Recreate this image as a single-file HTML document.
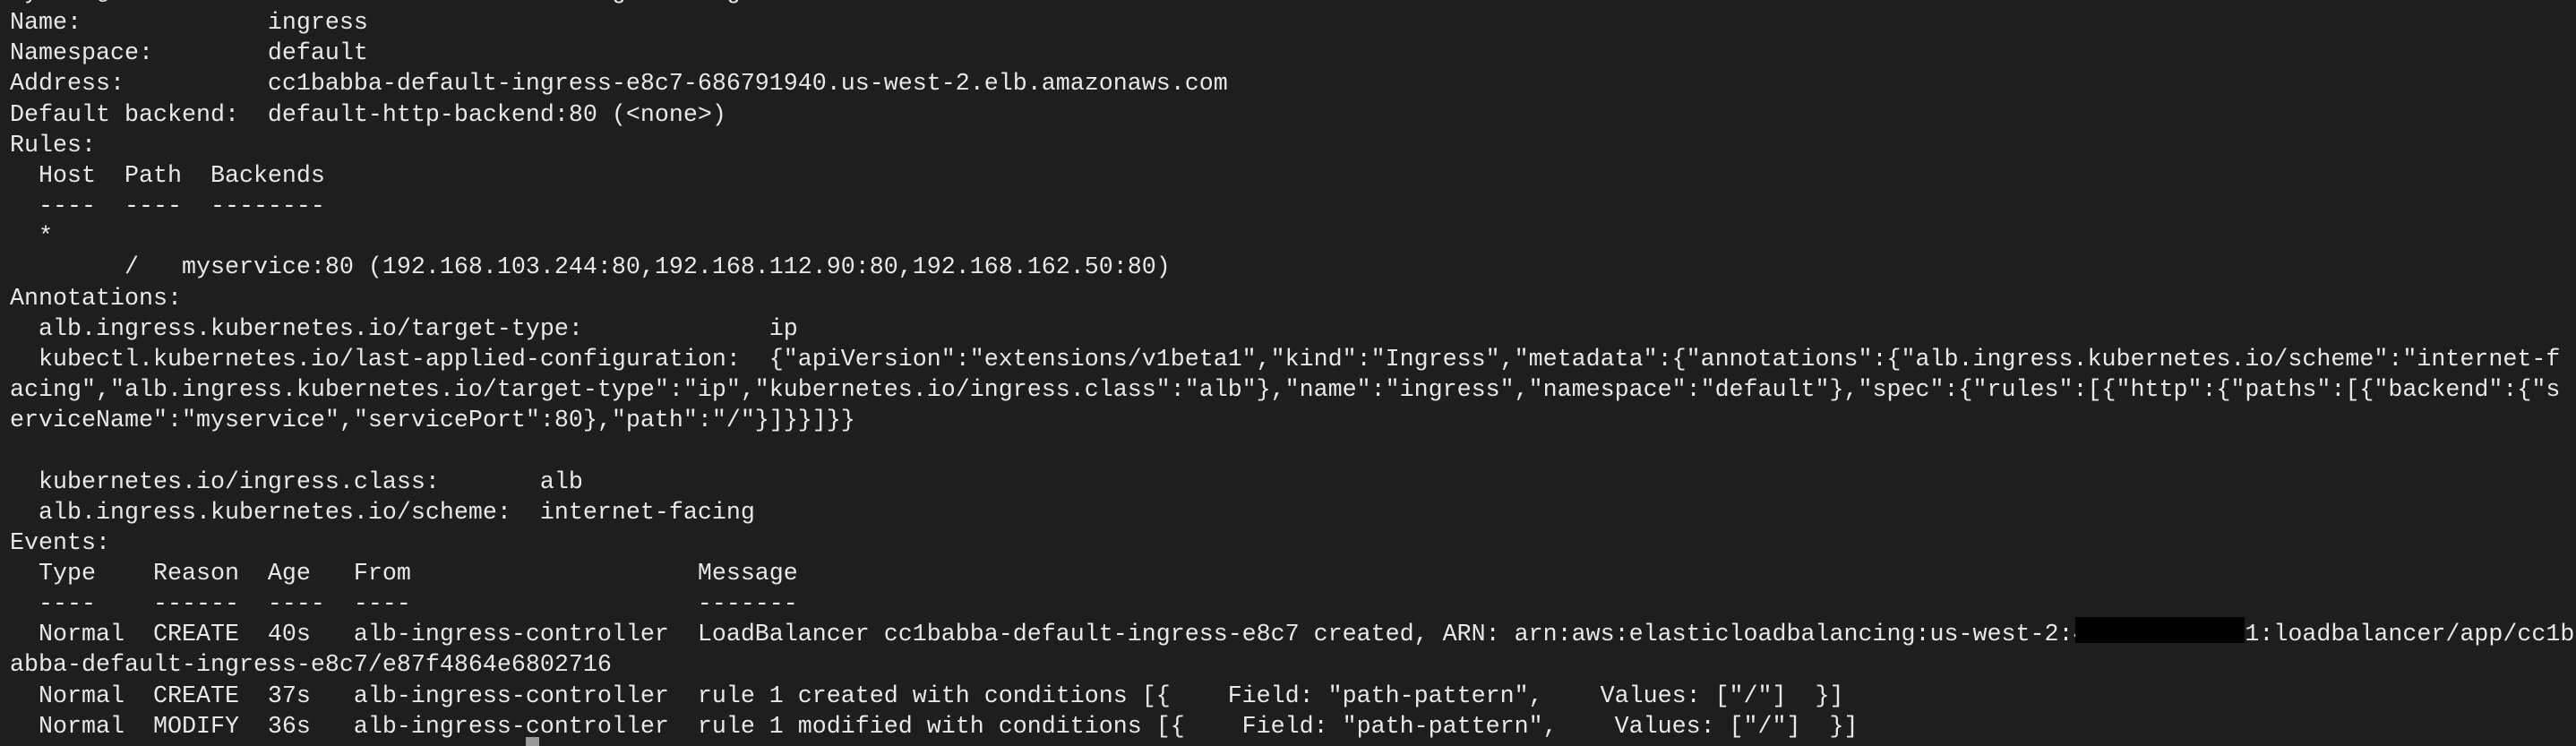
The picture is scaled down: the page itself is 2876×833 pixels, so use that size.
<!DOCTYPE html>
<html><head><meta charset="utf-8"><style>
html,body{margin:0;padding:0;background:#1e1e1e;width:2876px;height:830px;overflow:hidden;}
pre{position:absolute;left:11px;top:-25px;margin:0;font-family:"Liberation Mono",monospace;font-size:26.67px;line-height:34.15px;color:#e8e8e8;white-space:pre;}
.red{position:absolute;left:2317px;top:689px;width:189px;height:29px;background:#000;}
.cur{position:absolute;left:587px;top:823px;width:15px;height:10px;background:#9a9a9a;}
</style></head><body>
<pre>hyoeun@MacBook-Pro ~ % kubectl describe ingress ingress
Name:             ingress
Namespace:        default
Address:          cc1babba-default-ingress-e8c7-686791940.us-west-2.elb.amazonaws.com
Default backend:  default-http-backend:80 (&lt;none&gt;)
Rules:
  Host  Path  Backends
  ----  ----  --------
  *
        /   myservice:80 (192.168.103.244:80,192.168.112.90:80,192.168.162.50:80)
Annotations:
  alb.ingress.kubernetes.io/target-type:             ip
  kubectl.kubernetes.io/last-applied-configuration:  {"apiVersion":"extensions/v1beta1","kind":"Ingress","metadata":{"annotations":{"alb.ingress.kubernetes.io/scheme":"internet-f
acing","alb.ingress.kubernetes.io/target-type":"ip","kubernetes.io/ingress.class":"alb"},"name":"ingress","namespace":"default"},"spec":{"rules":[{"http":{"paths":[{"backend":{"s
erviceName":"myservice","servicePort":80},"path":"/"}]}}]}}

  kubernetes.io/ingress.class:       alb
  alb.ingress.kubernetes.io/scheme:  internet-facing
Events:
  Type    Reason  Age   From                    Message
  ----    ------  ----  ----                    -------
  Normal  CREATE  40s   alb-ingress-controller  LoadBalancer cc1babba-default-ingress-e8c7 created, ARN: arn:aws:elasticloadbalancing:us-west-2:4           1:loadbalancer/app/cc1b
abba-default-ingress-e8c7/e87f4864e6802716
  Normal  CREATE  37s   alb-ingress-controller  rule 1 created with conditions [{    Field: "path-pattern",    Values: ["/"]  }]
  Normal  MODIFY  36s   alb-ingress-controller  rule 1 modified with conditions [{    Field: "path-pattern",    Values: ["/"]  }]</pre>
<div class="red"></div>
<div class="cur"></div>
</body></html>
